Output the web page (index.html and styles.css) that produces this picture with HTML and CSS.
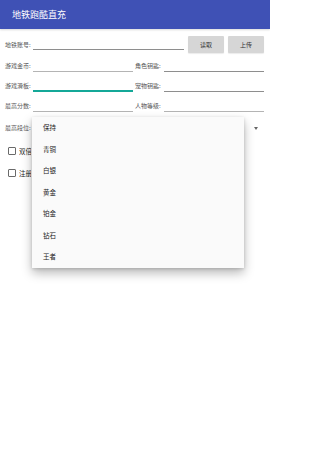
FILE: index.html
```html
<!DOCTYPE html>
<html lang="zh">
<head>
<meta charset="utf-8">
<title>地铁跑酷直充</title>
<link rel="stylesheet" href="styles.css">
</head>
<body>
<div class="app">
  <header class="appbar">地铁跑酷直充</header>
  <main class="form">
    <div class="row-account">
      <span class="label">地铁账号:</span>
      <span class="input dark"></span>
      <button class="btn">读取</button>
      <button class="btn">上传</button>
    </div>
    <div class="grid">
      <div class="field"><span class="label">游戏金币:</span><span class="input"></span></div>
      <div class="field"><span class="label">角色钥匙:</span><span class="input dark"></span></div>
      <div class="field"><span class="label">游戏滑板:</span><span class="input focus"></span></div>
      <div class="field"><span class="label">宠物钥匙:</span><span class="input dark"></span></div>
      <div class="field"><span class="label">最高分数:</span><span class="input"></span></div>
      <div class="field"><span class="label">人物等级:</span><span class="input"></span></div>
    </div>
    <div class="row-spinner">
      <span class="label">最高段位:</span>
      <span class="spinner-value"></span>
      <span class="arrow"></span>
    </div>
    <label class="check"><span class="box"></span><span class="check-text">双倍</span></label>
    <label class="check"><span class="box"></span><span class="check-text">注册</span></label>
  </main>
  <ul class="dropdown">
    <li>保持</li>
    <li>青铜</li>
    <li>白银</li>
    <li>黄金</li>
    <li>铂金</li>
    <li>钻石</li>
    <li>王者</li>
  </ul>
</div>
</body>
</html>
```
FILE: styles.css
```css
* { box-sizing: border-box; }
html, body { margin: 0; padding: 0; background: #ffffff; }
body {
  font-family: "Noto Sans CJK SC", "Noto Sans", Roboto, sans-serif;
  width: 270px;
  height: 470px;
  overflow: hidden;
}
.app { position: relative; width: 270px; height: 470px; }
.appbar {
  height: 29px;
  background: #3f51b5;
  color: #ffffff;
  font-size: 9px;
  line-height: 29px;
  padding-left: 12px;
  box-shadow: 0 1px 2px rgba(0,0,0,0.15);
}
.form { padding: 7px 6px 0 5px; }
.label {
  font-size: 6px;
  line-height: 10px;
  color: #555555;
  white-space: nowrap;
  flex: none;
}
.row-account {
  display: flex;
  align-items: center;
  height: 17px;
}
.row-account .label { width: 28px; }
.input {
  flex: 1;
  height: 1px;
  background: #b4b4b4;
}
.input.dark { background: #8e8e8e; }
.input.focus { height: 2px; background: #14a898; }
.row-account .input { margin-top: 9px; margin-right: 4px; }
.btn {
  width: 36px;
  height: 17px;
  border: none;
  border-radius: 1px;
  background: #d6d6d6;
  font-family: inherit;
  font-size: 6px;
  color: #333333;
  padding: 0;
  margin-left: 4px;
  box-shadow: 0 1px 1px rgba(0,0,0,0.08);
}
.btn:first-of-type { margin-left: 0; }
.grid {
  display: grid;
  grid-template-columns: 128px 129px;
  column-gap: 2px;
}
.field {
  display: flex;
  align-items: flex-end;
  height: 20px;
}
.grid .field:nth-child(1),
.grid .field:nth-child(2) { height: 19px; }
.field .label { width: 28px; margin-bottom: 1px; }
.grid .field:nth-child(even) .label { width: 29px; }
.row-spinner {
  display: flex;
  align-items: center;
  height: 28px;
  padding-top: 4px;
}
.row-spinner .label { width: 28px; }
.spinner-value { flex: 1; }
.arrow {
  width: 0;
  height: 0;
  border-left: 2.5px solid transparent;
  border-right: 2.5px solid transparent;
  border-top: 3px solid #666666;
  margin-right: 6px;
}
.check {
  display: flex;
  align-items: center;
  height: 22px;
  padding-left: 3px;
}
.box {
  width: 8px;
  height: 8px;
  border: 1px solid #6a6a6a;
  border-radius: 1px;
  margin-right: 3px;
}
.check-text {
  font-size: 6.5px;
  color: #222222;
  width: 12px;
  overflow: hidden;
  white-space: nowrap;
}
.dropdown {
  position: absolute;
  left: 32px;
  top: 117px;
  width: 212px;
  margin: 0;
  padding: 0;
  list-style: none;
  background: #fafafa;
  box-shadow: 0 5px 10px rgba(0,0,0,0.28), 0 1px 3px rgba(0,0,0,0.15);
}
.dropdown li {
  height: 21.5px;
  line-height: 21.5px;
  padding-left: 11px;
  font-size: 6.5px;
  color: #222222;
}
```
